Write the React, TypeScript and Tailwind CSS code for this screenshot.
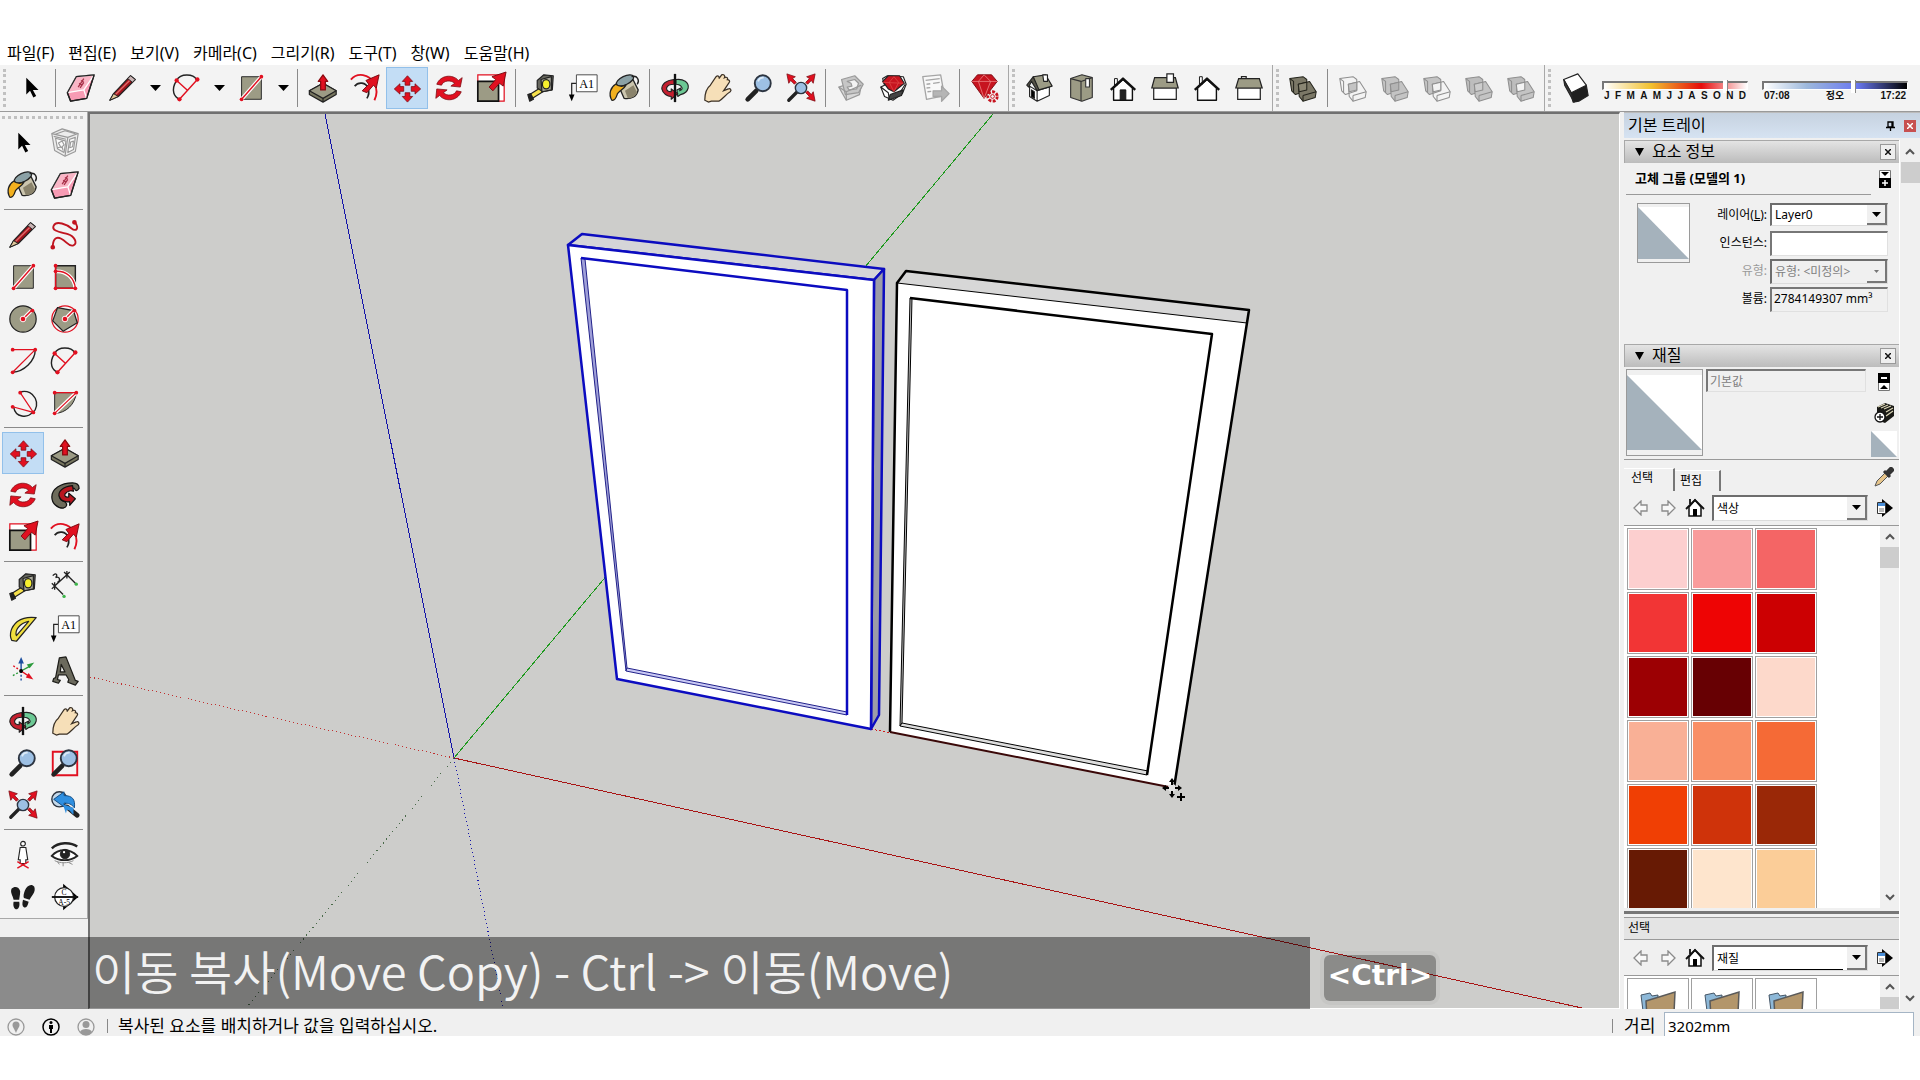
import { useState } from "react";
import type { ReactNode } from "react";

const RED = "#e11020";
const OLIVE = "#9c9b85";

const arrowUp = "M0 -14l5.500 6h-3v4h-5v-4h-3z";

function Lens() {
  return (
    <>
      <path d="M13 19L4 28" stroke="#222" strokeWidth="5" strokeLinecap="round" />
      <circle cx="20" cy="11" r="8.500" fill="#9dc0e4" stroke="#2c3440" strokeWidth="2" />
      <path d="M15 9a6 6 0 0 1 6-4" stroke="#dcebf8" strokeWidth="2" fill="none" />
    </>
  );
}

function Solids({ a, b, mid }: { a: string; b: string; mid: string }) {
  const line = a === "#7b7867" ? "#24241c" : "#8f8f8f";
  return (
    <g stroke={line} strokeWidth="1.100" strokeLinejoin="round">
      <path d="M2 6l14-2 4 3v12l-12 4-4-4z" fill={a} />
      <path d="M11 12l12-3 7 11-1 6-13 4-4-5z" fill={b} />
      <path d="M11 12l9-2v8l-8 2z" fill={mid} />
      <path d="M2 6l4 3v12M16 24l14-4M16 24v6" fill="none" />
    </g>
  );
}

const icons: Record<string, ReactNode> = {
  cursor: <path d="M11 5v18l4-4 3.500 7 3-1.500-3.500-6.500h6z" fill="#000" />,
  eraser: (
    <g stroke="#222" strokeWidth="1.400" strokeLinejoin="round">
      <path d="M1.500 21L11 4 30 2 22 27 5 30z" fill="#f79bb4" />
      <path d="M1.500 21L19 18 30 2 11 4z" fill="#f9b6c6" stroke="#fff" />
      <path d="M19 18l3 9" stroke="#fff" />
      <path d="M1.500 21L11 4 30 2 22 27 5 30z" fill="none" />
      <path d="M13 15l6-9M15 16l2-3M17 13l2-3M14 11l3 2M16 8l3 2" stroke="#a8324a" />
    </g>
  ),
  pencil: (
    <g strokeLinejoin="round">
      <path d="M6 22L24 3l5 4L11 25 2 29z" fill="#a3141c" stroke="#222" strokeWidth="1.300" />
      <path d="M8 23L26 5" stroke="#df6a6a" strokeWidth="1.500" />
      <path d="M6 22l5 3-9 4z" fill="#dfc79a" stroke="#222" />
      <path d="M24 3l5 4-3 3-5-4z" fill="#c9b4b4" stroke="#222" />
    </g>
  ),
  freehand: (
    <g fill="none" stroke="#c0141f" strokeWidth="2">
      <path d="M3 29c0-8 3-12 9-9s8 9 13 7 1-10-6-12S1 12 4 6s14-1 19 3 8 0 4-6" />
      <circle cx="3" cy="29" r="1.500" fill={RED} />
      <circle cx="26" cy="2.500" r="1.500" fill={RED} />
    </g>
  ),
  arc: (
    <g fill="none">
      <path d="M5 8C9 0 23 1 26 7M5 8C-2 19 3 26 8 28" stroke="#222" strokeWidth="1.500" />
      <path d="M5 8l12 11M27 7L8 28" stroke={RED} strokeWidth="1.500" />
      <g fill={RED}>
        <circle cx="5" cy="8" r="2.300" />
        <circle cx="27" cy="7" r="2.300" />
        <circle cx="8" cy="28" r="2.300" />
      </g>
    </g>
  ),
  rect: (
    <>
      <path d="M6 4h21v24H6z" fill={OLIVE} stroke="#222" />
      <path d="M6 28L27 4" stroke="#fff" strokeWidth="4" />
      <path d="M6 28L27 4" stroke={RED} strokeWidth="1.500" />
      <circle cx="6" cy="28" r="2" fill={RED} />
      <circle cx="27" cy="4" r="2" fill={RED} />
    </>
  ),
  rotrect: (
    <g fill="none" stroke={RED} strokeWidth="1.500">
      <path d="M6 4h21v24H6z" fill={OLIVE} stroke="#222" />
      <path d="M6 10c11-1 20 7 21 18" stroke="#fff" strokeWidth="4" />
      <path d="M6 4v24h21C26 17 17 9 6 10" />
      <g fill={RED} stroke="none">
        <circle cx="6" cy="4" r="2" />
        <circle cx="6" cy="10" r="2" />
        <circle cx="6" cy="28" r="2" />
        <circle cx="27" cy="28" r="2" />
      </g>
    </g>
  ),
  circle: (
    <>
      <circle cx="16" cy="16" r="14" fill={OLIVE} stroke="#222" strokeWidth="1.300" />
      <path d="M16 16l9-9" stroke="#fff" strokeWidth="4" />
      <path d="M16 16l9-9" stroke={RED} strokeWidth="1.500" />
      <circle cx="16" cy="16" r="3" fill={RED} stroke="#fff" />
      <circle cx="26" cy="7" r="2" fill={RED} />
    </>
  ),
  polygon: (
    <>
      <circle cx="16" cy="16" r="14" fill="none" stroke={RED} strokeWidth="1.300" />
      <path d="M8 4l17 3 4 13-15 9L3 18z" fill={OLIVE} stroke="#222" strokeWidth="1.300" />
      <path d="M16 16l9-9" stroke="#fff" strokeWidth="4" />
      <path d="M16 16l9-9" stroke={RED} strokeWidth="1.500" />
      <circle cx="16" cy="16" r="3" fill={RED} stroke="#fff" />
      <circle cx="26" cy="7" r="2" fill={RED} />
    </>
  ),
  arc2: (
    <g fill="none">
      <path d="M29 4c0 12-12 23-24 24" stroke="#222" strokeWidth="1.500" />
      <path d="M5 4h24L5 28" stroke={RED} strokeWidth="1.300" />
      <g fill={RED}>
        <circle cx="5" cy="4" r="2" />
        <circle cx="29" cy="4" r="2" />
        <circle cx="5" cy="28" r="2" />
      </g>
    </g>
  ),
  arc3: (
    <g fill="none">
      <path d="M14 4c14-3 22 14 12 23M6 20c2 12 15 12 20 6" stroke="#222" strokeWidth="1.500" />
      <path d="M13 5l14 21L5 20" stroke={RED} strokeWidth="1.300" />
      <g fill={RED}>
        <circle cx="13" cy="5" r="2" />
        <circle cx="27" cy="26" r="2" />
        <circle cx="5" cy="20" r="2" />
      </g>
    </g>
  ),
  pie: (
    <>
      <path d="M5 5v22C17 27 27 17 28 5z" fill={OLIVE} stroke="#222" />
      <path d="M5 27L28 5" stroke="#fff" strokeWidth="4" />
      <path d="M5 5h23L5 27" stroke={RED} strokeWidth="1.300" fill="none" />
      <g fill={RED}>
        <circle cx="5" cy="5" r="2" />
        <circle cx="28" cy="5" r="2" />
        <circle cx="5" cy="27" r="2" />
      </g>
    </>
  ),
  pushpull: (
    <g stroke="#222" strokeWidth="1.300" strokeLinejoin="round">
      <path d="M1.500 19L16 11l14 8v4L16 31 1.500 23z" fill="#77765f" />
      <path d="M1.500 19L16 11l14 8-14 8z" fill={OLIVE} />
      <path d="M16 27v4" />
      <path d="M16 2l5 7h-2.500v9h-5V9H11z" fill={RED} stroke="#8a0a10" />
    </g>
  ),
  offset: (
    <g fill="none">
      <path d="M1 7C8-1 20 1 26 11c3 6 3 12 0 18" stroke={RED} strokeWidth="2" />
      <path d="M5 14c4-5 12-4 14 2 2 5 1 8-1 11" stroke="#222" strokeWidth="1.800" />
      <path d="M13 19l7-7-3-4 14-6-3 14-3-3-7 8z" fill={RED} stroke="#7a0a10" />
    </g>
  ),
  move: (
    <g fill={RED} stroke="#7a0a10" strokeWidth=".8" transform="translate(16.500 17)">
      {[0, 90, 180, 270].map((r) => (
        <path key={r} d={arrowUp} transform={`rotate(${r})`} />
      ))}
    </g>
  ),
  rotate: (
    <g fill={RED} stroke="#7a0a10" strokeWidth=".8">
      <path d="M3 12C7 2 20 1 26 8l4-3-2 10-10-1 4-3C18 7 10 8 8 13z" />
      <path d="M29 20C25 30 12 31 6 24l-4 3 1-10 11 1-4 3c4 4 12 3 14-2z" />
    </g>
  ),
  followme: (
    <g stroke="#111" strokeWidth="1.300" strokeLinejoin="round">
      <path d="M31 9c0-3-2-6-7-6C11 3 2 10 2 18c0 7 6 12 12 12 4-1 5-4 2-7-4-1-6-3-6-6 1-6 9-9 16-8 1 3 3 3 5 0z" fill="#6d6b5b" />
      <path d="M24 6C13 7 8 13 10 18c2 4 6 6 11 5v4l6-7-7-6v4c-3 1-5-1-4-3 2-3 6-4 9-3z" fill="#b9161f" />
    </g>
  ),
  scale: (
    <>
      <path d="M2 2h28v28H2z" fill="#fff" stroke={RED} strokeWidth="1.300" />
      <path d="M2 9h22v21H2z" fill={OLIVE} stroke="#111" strokeWidth="1.800" />
      <path d="M14 15l7-8-4-3 15-5-3 15-4-3-7 8z" fill={RED} stroke="#7a0a10" />
    </>
  ),
  tape: (
    <g stroke="#222" strokeWidth="1.300" strokeLinejoin="round">
      <path d="M4 23l11-7 3 4-11 7z" fill="#f5e04a" />
      <path d="M2 23l3-1 3 6-4 2z" fill="#222" />
      <path d="M12 8l7-6 10 1-1 15-10 2-6-4z" fill="#67675e" />
      <path d="M16 7l11-3v14l-10 2z" fill="#aaa99b" />
      <ellipse cx="21.500" cy="12" rx="4" ry="5" fill="#f7f02e" />
    </g>
  ),
  dimension: (
    <g fill="none" stroke="#222" strokeWidth="1.400">
      <path d="M5 15L18 3M18 3l9 9M5 15l9 9M2 12l6 6M8 12l-6 6M5 11v8M15 0l6 6M21 0l-6 6M18-1v8" />
      <path d="M3 4c3-4 6-1 3 2 4-2 6 3 2 5" />
      <circle cx="28" cy="13" r="1.800" fill="#3db54a" stroke="none" />
      <circle cx="15" cy="26" r="1.800" fill="#3db54a" stroke="none" />
    </g>
  ),
  protractor: (
    <g stroke="#222" strokeWidth="1.300" strokeLinejoin="round">
      <path d="M4 28C1 22 3 14 10 8c6-4 13-5 20-4L9 29z" fill="#f0df3e" />
      <path d="M9 23c-2-5 3-13 13-15z" fill="#f3f3f3" />
    </g>
  ),
  label: (
    <g>
      <path d="M4 24V11h5" fill="none" stroke="#222" strokeWidth="1.300" />
      <path d="M1 23h6l-3 7z" />
      <path d="M9 2h22v18H9z" fill="#fff" stroke="#444" />
      <text x="20" y="16" textAnchor="middle" fontSize="13" fontFamily="Liberation Serif, serif">A1</text>
    </g>
  ),
  paint: (
    <g stroke="#222" strokeWidth="1.400" strokeLinejoin="round">
      <path d="M8 11L23 4l7 14c-1 7-7 10-15 9z" fill="#cbc5ae" />
      <path d="M16 19l3 8c4 0 8-2 10-6l-4-8z" fill="#8a836c" stroke="none" />
      <ellipse cx="16" cy="8" rx="10" ry="4.500" transform="rotate(-26 16 8)" fill="#8ba1a6" />
      <path d="M6 12C1 15-2 22 2 29c4 1 5-4 6-7 3-4 7-5 9-9-4 2-8 1-11-1z" fill="#f2b01e" />
      <path d="M23 4c6-2 9 4 6 8" fill="none" />
    </g>
  ),
  axes: (
    <g strokeWidth="1.500">
      <path d="M14 16v11" stroke="#1d4fa0" strokeDasharray="2 2" />
      <path d="M14 16L5 10" stroke={RED} strokeDasharray="2 2" />
      <path d="M14 16L5 21" stroke="#2a9a3a" strokeDasharray="2 2" />
      <path d="M14 16V6" stroke="#1d4fa0" />
      <path d="M11 8l3-7 3 7z" fill="#1d4fa0" />
      <path d="M14 16l9-5" stroke="#2a9a3a" />
      <path d="M20 9l8-2-5 6z" fill="#2a9a3a" />
      <path d="M14 16l9 6" stroke={RED} />
      <path d="M22 18l5 7-8-2z" fill={RED} />
      <circle cx="14" cy="16" r="2" />
    </g>
  ),
  text3d: (
    <g stroke="#1c1c18" strokeWidth="1.300" strokeLinejoin="round">
      <path d="M10 2l7-1 10 25 3 1-3 4-8-3 1-3-3-5H9l-1 5 3 1-2 3-6-2 1-3 2-1z" fill="#6b6a5d" />
      <path d="M12 9l4 8h-5z" fill="#f3f3f3" />
    </g>
  ),
  orbit: (
    <g stroke="#222" strokeWidth="1.200" strokeLinejoin="round">
      <path d="M17 7c8-1 14 3 13 9-1 4-4 6-8 7l-3 2-1-7 4-2-1 3c3-1 3-3 2-4-1-2-4-3-6-3z" fill="#6cc894" />
      <path d="M15 7C7 8 2 11 2 17c1 5 6 8 10 8v3l7-6-7-5v3c-4 0-5-2-5-4 1-3 4-4 8-4z" fill="#c4202f" />
      <path d="M16 1v30" strokeWidth="2.500" stroke="#111" />
    </g>
  ),
  pan: (
    <path
      d="M3 29c0-7 2-13 6-16l6-9c2-2 4 0 3 2l3-4c2-1 4 1 3 3 2-1 4 0 3 2 2 0 3 2 2 3l-6 9 5-2c2-1 4 1 2 3-5 3-7 7-12 10H10l-3 1z"
      fill="#f6dfb8"
      stroke="#3a3025"
      strokeWidth="1.300"
    />
  ),
  zoom: <Lens />,
  zoomwin: (
    <>
      <path d="M3 4h26v25H3z" fill="none" stroke={RED} strokeWidth="2" />
      <Lens />
    </>
  ),
  zoomext: (
    <>
      <path d="M12 20L3 29" stroke="#222" strokeWidth="3.500" strokeLinecap="round" />
      <circle cx="16" cy="16" r="6" fill="#9dc0e4" stroke="#2c3440" strokeWidth="1.500" />
      <g fill={RED} stroke="#7a0a10" strokeWidth=".8">
        <path d="M1 1l9 3-3 2 4 4-2 2-4-4-2 3z" />
        <path d="M31 1l-9 3 3 2-4 4 2 2 4-4 2 3z" />
        <path d="M31 30l-9-3 3-2-4-4 2-2 4 4 2-3z" />
      </g>
    </>
  ),
  zoomprev: (
    <>
      <circle cx="10" cy="10" r="8" fill="#c3d8ea" stroke="#2c3440" strokeWidth="1.500" />
      <path d="M18 18l11 9" stroke="#222" strokeWidth="5" strokeLinecap="round" />
      <path d="M4 10l11-8v4c9 0 12 4 11 13-3-4-6-5-11-5v4z" fill="#2f8fe0" stroke="#114a80" />
      <path d="M14 16c4 0 7 2 11 3v7c-3-2-3-5-7-5l-1 4z" fill="#2f8fe0" />
    </>
  ),
  camera: (
    <g stroke="#222" strokeWidth="1.200" fill="#fff">
      <circle cx="16" cy="4" r="2.500" />
      <path d="M13 8h6l2 13h-2v4h-6v-4h-2z" />
      <path d="M10 23l12 7M22 23l-12 7" stroke={RED} strokeWidth="1.500" />
    </g>
  ),
  eye: (
    <g fill="none" stroke="#222">
      <path d="M2 9C9 2 22 2 29 7" strokeWidth="2.500" />
      <path d="M2 17C9 9 21 9 29 17c-8 6-19 6-27 0z" fill="#fff" strokeWidth="2" />
      <circle cx="16" cy="15" r="5" fill="#222" />
      <circle cx="15" cy="13" r="1.200" fill="#fff" stroke="none" />
      <path d="M8 23l2 3M14 24v4M20 24l4 2M5 22c6 3 14 3 20 0" stroke="#888" />
    </g>
  ),
  walk: (
    <g fill="#1b1b1b">
      <path d="M4 7c3-3 8-2 9 3 0 4-1 7-1 9H6C5 14 2 11 4 7zM6 21h6c1 5-1 8-3 8s-4-3-3-8z" />
      <path d="M28 5c-3-4-8-1-10 4-1 3-2 6-1 8l6 2c2-5 7-8 5-14zM16 19l6 2c-1 5-3 7-5 6s-2-4-1-8z" />
    </g>
  ),
  section: (
    <g>
      <path d="M14 2l16 14-16 14z" />
      <circle cx="15" cy="16" r="10" fill="#fff" stroke="#222" strokeWidth="1.300" />
      <path d="M2 16h28" stroke="#111" strokeWidth="2" />
      <text x="15" y="14" textAnchor="middle" fontSize="8" fontFamily="Liberation Serif, serif">C</text>
      <text x="15" y="24" textAnchor="middle" fontSize="8" fontFamily="Liberation Serif, serif">A-5</text>
    </g>
  ),
  component: (
    <g fill="none" stroke="#999" strokeWidth="1.200" strokeLinejoin="round">
      <path d="M2 6l11-5 17 5-3 19-11 5L5 24z" fill="#ececec" />
      <path d="M2 6l17 4 11-4M19 10l-3 20M4 9l13 3M5 7l11-4 11 3" />
      <path d="M6 11l11 3-2 12-7-4zM21 12l6-2-2 13-6 3z" fill="#fafafa" />
      <path d="M9 16l4-2 2 4-3 3zM8 21l5-1 1 4M22 15l3-1-1 6-3 1z" />
    </g>
  ),
  warehouse: (
    <g stroke="#9a9a9a" strokeWidth="1.300" fill="#d8d8d8" strokeLinejoin="round">
      <path d="M3 15l12-4 12 2-2 10-14 6z" />
      <path d="M6 7l14-4 9 9-5 9-14 2z" fill="#c6c6c6" />
      <path d="M12 9l8-2 4 4-2 6-8 1-2-3 5-1-1-3z" fill="#f3f3f3" />
      <path d="M3 15l8 5 16-7M11 20v9" fill="none" />
    </g>
  ),
  ruby: (
    <g stroke="#222" strokeWidth="1.200" strokeLinejoin="round">
      <path d="M5 6l5-3 17 1 3 8-4 10-10 7-9-4-4-10 4-2z" fill="#fff" />
      <path d="M11 29l2-6 14-5-2 6z" fill="#444" />
      <path d="M3 15l8 6 1 7M29 12l-5 8" fill="none" />
      <path d="M5 9l6-6h12l5 8-11 9-6-3z" fill="#c7141f" />
      <path d="M5 10l22 1M12 10l5 10 5-10-5-6z" fill="none" stroke="#e04a4a" strokeWidth=".8" />
    </g>
  ),
  layout: (
    <g stroke="#a5a5a5" strokeWidth="1.400" fill="#f8f8f8" strokeLinejoin="round">
      <path d="M3 4l19-2 4 22-19 4z" />
      <path d="M6 8l15-2M7 12l4-.500M7 16l4-.500M8 20l4-.500M14 11l7-1" />
      <path d="M14 19h9v-5l8 8-8 8v-5h-9z" fill="#b5b5b5" />
    </g>
  ),
  rubygear: (
    <g stroke="#7d0a12" strokeWidth="1" strokeLinejoin="round">
      <path d="M2 9l6-7h15l6 7-14 18z" fill="#c7141f" />
      <path d="M2 9h27M9 9l6 18 7-18-7-7z" fill="none" stroke="#ee8a8a" strokeWidth=".8" />
      <circle cx="24" cy="25" r="5" fill="#f3f3f3" stroke="#c7141f" strokeWidth="3" strokeDasharray="3 1.500" />
      <circle cx="24" cy="25" r="2" fill="#f3f3f3" stroke="#c7141f" />
    </g>
  ),
  iso: (
    <g stroke="#222" strokeWidth="1.200" strokeLinejoin="round">
      <path d="M6 14l8 5v11l-8-5zM14 19l13-4v9l-13 6z" fill="#fff" />
      <path d="M3 13L10 4l6 13-2 2L8 9l-3 6z" fill="#555347" />
      <path d="M10 4l13-2 7 12-14 4z" fill={OLIVE} />
      <path d="M20 2h5v7h-4z" fill="#fff" />
      <path d="M8 18l3 2v7l-3-2z" />
    </g>
  ),
  top: (
    <g stroke="#333" strokeWidth="1.200" strokeLinejoin="round">
      <path d="M5 6l12-4 11 3v21l-11 4-12-4z" fill={OLIVE} />
      <path d="M5 6l11 3 12-4M16 9v21" fill="none" />
      <path d="M21 6h4v9h-4z" fill="#fff" />
    </g>
  ),
  front: (
    <g stroke="#111" strokeLinejoin="round">
      <path d="M6 16v13h20V16L16 7z" fill="#fff" strokeWidth="1.500" />
      <path d="M7 6h3v7H7z" fill="#fff" />
      <path d="M3 18L16 6l13 12" fill="none" strokeWidth="2.500" />
      <path d="M13 18h6v11h-6z" fill="#222" />
    </g>
  ),
  right: (
    <g stroke="#222" strokeWidth="1.300">
      <path d="M4 16h24v12H4z" fill="#fff" />
      <path d="M5 5h22l3 11H2z" fill={OLIVE} />
      <path d="M18 1h7v9h-7z" fill="#fff" />
    </g>
  ),
  back: (
    <g stroke="#111" strokeLinejoin="round">
      <path d="M6 16v13h20V16L16 7z" fill="#fff" strokeWidth="1.500" />
      <path d="M8 4h3v8H8z" fill="#fff" />
      <path d="M3 18L16 6l13 12" fill="none" strokeWidth="2.500" />
    </g>
  ),
  left: (
    <g stroke="#222" strokeWidth="1.300">
      <path d="M8 4h5v3H8z" fill="#fff" />
      <path d="M4 16h24v12H4z" fill="#fff" />
      <path d="M5 6h22l3 10H2z" fill={OLIVE} />
    </g>
  ),
  shell: <Solids a="#7b7867" b="#7b7867" mid="#8a8774" />,
  intersect: <Solids a="none" b="none" mid="#c4c4c4" />,
  union: <Solids a="#c4c4c4" b="#c4c4c4" mid="#b4b4b4" />,
  subtract: <Solids a="#c4c4c4" b="none" mid="#f3f3f3" />,
  trim: <Solids a="#bdbdbd" b="#c4c4c4" mid="#cdcdcd" />,
  split: <Solids a="#bdbdbd" b="#c4c4c4" mid="#f3f3f3" />,
  shadow: (
    <g stroke="#222" strokeWidth="1.200" strokeLinejoin="round">
      <path d="M11 20l17-7 2 11-10 6-6 1z" fill="#1f1f1f" />
      <path d="M4 7l15-6 9 12-16 8z" fill="#fff" />
      <path d="M4 7l8 14 3 10L5 13z" fill="#3a3a3a" />
    </g>
  ),
};

function Icon({ name }: { name: string }) {
  return (
    <svg className="w-8 h-8 overflow-visible" viewBox="-1 -1 34 34" aria-hidden="true">
      {icons[name]}
    </svg>
  );
}

function Tool({ name, active, onPick }: { name: string; active: boolean; onPick: (n: string) => void }) {
  return (
    <button
      type="button"
      aria-label={name}
      onClick={() => onPick(name)}
      className={`flex w-[42px] h-[42px] shrink-0 items-center justify-center border ${
        active ? "bg-[#c3ddf5] border-[#92c0ea]" : "border-transparent"
      }`}
    >
      <Icon name={name} />
    </button>
  );
}

const toolGroups: string[][] = [
  ["cursor", "|", "eraser", "pencil", "v", "arc", "v", "rect", "v", "|", "pushpull", "offset", "move", "rotate", "scale", "|", "tape", "label", "paint", "|", "orbit", "pan", "zoom", "zoomext", "|", "warehouse", "ruby", "layout", "|", "rubygear"],
  ["iso", "top", "front", "right", "back", "left"],
  ["shell", "|", "intersect", "union", "subtract", "trim", "split"],
  ["shadow"],
];

const sideGroups: string[][] = [
  ["cursor", "component", "paint", "eraser"],
  ["pencil", "freehand", "rect", "rotrect", "circle", "polygon", "arc2", "arc", "arc3", "pie"],
  ["move", "pushpull", "rotate", "followme", "scale", "offset"],
  ["tape", "dimension", "protractor", "label", "axes", "text3d"],
  ["orbit", "pan", "zoom", "zoomwin", "zoomext", "zoomprev"],
  ["camera", "eye", "walk", "section"],
];

const menus = ["파일(F)", "편집(E)", "보기(V)", "카메라(C)", "그리기(R)", "도구(T)", "창(W)", "도움말(H)"];

const swatches = [
  "#fccfcf", "#f99b9b", "#f46565",
  "#f23535", "#ee0404", "#cc0002",
  "#9c0003", "#670003", "#fdd9cb",
  "#f9b096", "#f98f66", "#f56a36",
  "#f03f04", "#cf330a", "#9a2807",
  "#671a04", "#fee5cd", "#fbcd98",
];

function ShadowSlider({ label, value, track, children }: { label: string; value: number; track: string; children: ReactNode }) {
  return (
    <div className="w-[146px] pt-4">
      <input
        type="range"
        aria-label={label}
        defaultValue={value}
        className={`block w-full h-[9px] appearance-none border-t-2 border-l-2 border-b border-r border-t-[#777] border-l-[#777] border-white ${track} [&::-webkit-slider-thumb]:appearance-none [&::-webkit-slider-thumb]:w-[5px] [&::-webkit-slider-thumb]:h-[13px] [&::-webkit-slider-thumb]:bg-white [&::-webkit-slider-thumb]:border-r [&::-webkit-slider-thumb]:border-[#888]`}
      />
      <div className="flex justify-between px-0.5 font-['Liberation_Sans','Noto_Sans_CJK_KR',sans-serif] text-[10px] leading-3 font-bold text-[#111]">
        {children}
      </div>
    </div>
  );
}

function DefaultFace({ className }: { className: string }) {
  return (
    <svg className={className} viewBox="0 0 50 50" preserveAspectRatio="none" aria-hidden="true">
      <path d="M0 0h50v50H0z" fill="#fff" />
      <path d="M0 0l50 50H0z" fill="#a5b2bc" />
    </svg>
  );
}

function SectionHeader({ title }: { title: string }) {
  return (
    <div className="flex items-center h-[23px] pl-[10px] pr-[3px] border-t border-l border-[#a8a8a8] bg-linear-to-b from-[#e4e4e4] to-[#bcbcbc]">
      <svg className="w-[9px] h-[8px] mr-2" viewBox="0 0 9 8" aria-hidden="true">
        <path d="M0 0h9L4.500 8z" />
      </svg>
      <h2 className="flex-1 pb-0.5 text-base leading-5">{title}</h2>
      <button type="button" aria-label="닫기" className="flex w-4 h-4 items-center justify-center border border-[#999] bg-[#eee]">
        <svg className="w-[6px] h-[6px]" viewBox="0 0 6 6" aria-hidden="true">
          <path d="M0 0l6 6M6 0L0 6" stroke="#111" strokeWidth="1.500" />
        </svg>
      </button>
    </div>
  );
}

type DropdownProps = {
  id: string;
  label?: string;
  value: string;
  disabled?: boolean;
  underlined?: boolean;
  className: string;
};

function Dropdown({ id, label, value, disabled, underlined, className }: DropdownProps) {
  return (
    <div className={`relative border-t-2 border-l-2 border-b border-r border-t-[#6d6d6d] border-l-[#6d6d6d] border-[#dcdcdc] ${className}`}>
      <select
        id={id}
        aria-label={label}
        disabled={disabled}
        className={`block w-full h-full appearance-none pl-[3px] outline-none opacity-100 ${disabled ? "text-[#808080] bg-[#f0f0f0]" : "bg-white"}`}
      >
        <option>{value}</option>
      </select>
      {underlined && <span className="absolute left-1 right-6 bottom-0 h-px bg-black pointer-events-none" />}
      <span className="absolute inset-y-0 right-0 flex w-5 items-center justify-center border-r-2 border-b-2 border-[#777] bg-[#f0f0f0] pointer-events-none">
        <svg className="w-[9px] h-[5px]" viewBox="0 0 9 5" aria-hidden="true">
          <path d={disabled ? "M2 1h5L4.500 4z" : "M0 0h9L4.500 5z"} fill={disabled ? "#777" : "#000"} />
        </svg>
      </span>
    </div>
  );
}

function Chevron({ up }: { up?: boolean }) {
  return (
    <svg className="w-[10px] h-[7px] shrink-0" viewBox="0 0 10 7" aria-hidden="true">
      <path d={up ? "M1 6l4-4 4 4" : "M1 1l4 4 4-4"} fill="none" stroke="#555" strokeWidth="2" />
    </svg>
  );
}

function CollectionNav({ id, value, underlined }: { id: string; value: string; underlined?: boolean }) {
  return (
    <div className="flex items-center h-[34px] pl-[9px]">
      <button type="button" aria-label="뒤로" className="w-[27px]">
        <svg className="w-4 h-4" viewBox="0 0 16 16" aria-hidden="true">
          <path d="M1 8l7-7v4h6v6H8v4z" fill="#f8f8f8" stroke="#8a8a8a" strokeWidth="1.300" />
        </svg>
      </button>
      <button type="button" aria-label="앞으로" className="w-[25px]">
        <svg className="w-4 h-4" viewBox="0 0 16 16" aria-hidden="true">
          <path d="M15 8L8 1v4H2v6h6v4z" fill="#f8f8f8" stroke="#8a8a8a" strokeWidth="1.300" />
        </svg>
      </button>
      <button type="button" aria-label="모델 안" className="w-[27px]">
        <svg className="w-5 h-5" viewBox="0 0 20 20" aria-hidden="true">
          <path d="M4 9v9h12V9l-6-7z" fill="#fff" stroke="#111" strokeWidth="1.500" />
          <path d="M1 11l9-9 9 9M5 6V1" fill="none" stroke="#111" strokeWidth="1.800" />
          <path d="M8 11h4v7H8z" />
        </svg>
      </button>
      <Dropdown id={id} label={value} value={value} underlined={underlined} className="w-[156px] h-[26px]" />
      <button type="button" aria-label="세부 정보" className="ml-[9px]">
        <svg className="w-4 h-[18px]" viewBox="0 0 16 18" aria-hidden="true">
          <path d="M5 0l11 9-11 9z" />
          <path d="M.5 3.500h8v11h-8z" fill="#fff" stroke="#333" />
          <path d="M1 4h7v3H1z" fill="#4b8fd8" />
          <path d="M2 10h5M2 12h5" stroke="#777" />
        </svg>
      </button>
    </div>
  );
}

const sunken = "border-t-2 border-l-2 border-b border-r border-t-[#777] border-l-[#777] border-[#e0e0e0] px-[2px] outline-none";

function Tray() {
  return (
    <aside className="w-[300px] shrink-0 pl-1 bg-[#f0f0f0] text-xs">
      <div className="flex items-center h-[26px] pl-1 pr-1 bg-linear-to-b from-[#c6d2e0] to-[#d6e3f2] border-t border-[#bbb]">
        <h1 className="flex-1 pb-px text-base leading-5">기본 트레이</h1>
        <svg className="w-[9px] h-[10px] mr-[9px]" viewBox="0 0 9 10" aria-hidden="true">
          <path d="M2 1h5v5H2zM0 6.500h9M4.500 6v4M6 1v5" fill="none" stroke="#000" strokeWidth="1.300" />
        </svg>
        <button type="button" aria-label="트레이 닫기" className="flex w-3 h-3 items-center justify-center bg-[#c75050]">
          <svg className="w-[6px] h-[6px]" viewBox="0 0 6 6" aria-hidden="true">
            <path d="M0 0l6 6M6 0L0 6" stroke="#fff" strokeWidth="1.500" />
          </svg>
        </button>
      </div>
      <div className="flex pt-0.5">
        <div className="w-[276px] border-r border-white">
          <SectionHeader title="요소 정보" />
          <div className="h-[181px]">
            <div className="flex items-center justify-between h-[31px] ml-0.5 mr-2 pl-[9px]">
              <strong className="text-[13px]">고체 그룹 (모델의 1)</strong>
              <svg className="w-3 h-[18px]" viewBox="0 0 12 18" aria-hidden="true">
                <path d="M.5 .5h11v17H.5z" fill="#fff" stroke="#777" />
                <path d="M2 2h8L6 6zM0 8h12v10H0z" />
                <path d="M3 13h6M6 10v6" stroke="#fff" strokeWidth="1.500" />
              </svg>
            </div>
            <div className="ml-0.5 mr-[28px] border-t border-[#9a9a9a]" />
            <div className="flex pt-2 pl-[13px]">
              <div className="w-[53px] h-[60px] py-[3px] border border-[#9a9a9a]">
                <DefaultFace className="w-full h-full" />
              </div>
              <div className="grid grid-cols-[77px_118px] flex-1 auto-rows-[25px] gap-x-[3px] gap-y-[3px] items-start">
                <label htmlFor="layer" className="text-right leading-6">레이어(<u>L</u>):</label>
                <Dropdown id="layer" value="Layer0" className="h-[23px]" />
                <label htmlFor="instance" className="text-right leading-6">인스턴스:</label>
                <input id="instance" className={`${sunken} w-full h-[25px] bg-white`} />
                <label htmlFor="kind" className="text-right leading-6 text-[#9a9a9a]">유형:</label>
                <Dropdown id="kind" value="유형: <미정의>" disabled className="h-[25px]" />
                <label htmlFor="volume" className="text-right leading-6">볼륨:</label>
                <input id="volume" readOnly value="2784149307 mm³" className={`${sunken} w-full h-[25px] pb-1 bg-[#f0f0f0]`} />
              </div>
            </div>
          </div>
          <SectionHeader title="재질" />
          <div className="flex items-start h-[93px] pt-0.5 pl-0.5 border-b border-[#999]">
            <div className="w-[77px] h-[87px] pt-[5px] pb-[5px] border border-[#9a9a9a]">
              <DefaultFace className="w-full h-full" />
            </div>
            <input aria-label="재질 이름" disabled value="기본값" className={`${sunken} w-[160px] h-[23px] ml-[3px] text-[#808080] bg-[#f0f0f0]`} />
            <div className="flex flex-col items-center gap-[11px] w-[26px] ml-[5px] pt-1">
              <svg className="w-3 h-[18px]" viewBox="0 0 12 18" aria-hidden="true">
                <path d="M.5 .5h11v17H.5z" fill="#fff" stroke="#777" />
                <path d="M0 0h12v10H0zM2 16h8l-4-4z" />
                <path d="M3 5h6" stroke="#fff" strokeWidth="2" />
              </svg>
              <svg className="w-5 h-[22px]" viewBox="0 0 20 22" aria-hidden="true">
                <path d="M3 5l8-4 9 3v10l-9 7-8-3z" fill="#1a1a16" />
                <path d="M4 5l7-3M7 6l7-3M10 7l7-3M12 10l7-4M12 14l7-5" stroke="#d8d3b4" strokeWidth="1.300" />
                <circle cx="6" cy="15" r="5" fill="#fff" stroke="#111" strokeWidth="1.300" />
                <path d="M3 15h6M6 12v6" stroke="#111" strokeWidth="1.300" />
              </svg>
              <DefaultFace className="w-[26px] h-[26px] -mt-1" />
            </div>
          </div>
          <div className="flex items-end h-[31px] pr-[5px]">
            <button type="button" className="w-[51px] h-[23px] pl-[7px] pb-1 text-left border-t border-t-white border-r-2 border-r-[#777]">선택</button>
            <button type="button" className="w-[46px] h-[21px] pl-[5px] text-left border-t border-t-white border-r-2 border-r-[#777]">편집</button>
            <button type="button" aria-label="샘플 페인트" className="ml-auto pb-1">
              <svg className="w-5 h-5" viewBox="0 0 20 20" aria-hidden="true">
                <path d="M1 19l2-5 8-8 3 3-8 8z" fill="#e7c58a" stroke="#555" />
                <path d="M10 4l6 6M12 6l5-5 2 2-5 5z" stroke="#333" strokeWidth="3" />
              </svg>
            </button>
          </div>
          <div className="border-b border-[#999]">
            <CollectionNav id="collection" value="색상" />
          </div>
          <div className="flex h-[382px] bg-white overflow-hidden">
            <div className="grid flex-1 grid-cols-[62px_62px_62px] auto-rows-[62px] gap-0.5 pt-0.5 pl-[3px]">
              {swatches.map((c) => (
                <button key={c} type="button" aria-label={c} className="p-px border border-[#a0a0a0] bg-white">
                  <span className="block w-full h-full" style={{ backgroundColor: c }} />
                </button>
              ))}
            </div>
            <div className="flex flex-col items-center w-[19px] py-[7px] bg-[#f0f0f0]">
              <Chevron up />
              <div className="w-full h-[21px] mt-[7px] mb-auto bg-[#cdcdcd]" />
              <Chevron />
            </div>
          </div>
          <div className="mt-[3px] h-[3px] bg-[#777]" />
          <div className="mt-[3px] h-[23px] pl-1 leading-5 border-y border-[#999] bg-[#e4e4e4]">선택</div>
          <div className="pt-px border-b border-[#999]">
            <CollectionNav id="collection2" value="재질" underlined />
          </div>
          <div className="flex h-[33px] bg-white overflow-hidden">
            <div className="grid flex-1 grid-cols-[62px_62px_62px] auto-rows-[62px] gap-0.5 pt-0.5 pl-[3px]">
              {[0, 1, 2].map((i) => (
                <button key={i} type="button" aria-label="폴더" className="border border-[#a0a0a0]">
                  <svg className="w-full h-full" viewBox="0 0 60 60" aria-hidden="true">
                    <path d="M13 16l9-2 2 3 6-1-2 40H18z" fill="#8db8d8" stroke="#456" />
                    <path d="M18 22l29-9-2 42H20z" fill="#b3966b" stroke="#5a5a5a" strokeWidth="1.500" />
                  </svg>
                </button>
              ))}
            </div>
            <div className="flex flex-col items-center w-[19px] pt-[7px] bg-[#f0f0f0]">
              <Chevron up />
              <div className="w-full h-[21px] mt-[7px] bg-[#cdcdcd]" />
            </div>
          </div>
        </div>
        <div className="flex flex-1 flex-col items-center pt-2 pb-[7px]">
          <Chevron up />
          <div className="w-[19px] h-[21px] mt-[7px] mb-auto bg-[#cdcdcd]" />
          <Chevron />
        </div>
      </div>
    </aside>
  );
}

function Viewport() {
  return (
    <svg className="block w-full" viewBox="90 114 1529 894" role="img" aria-label="모델">
      <path d="M90 114h1529v894H90z" fill="#cdcdcb" />
      <g fill="none" strokeWidth="1" shapeRendering="crispEdges">
        <path d="M454 758L325 114" stroke="#1414a8" />
        <path d="M454 758L993 114" stroke="#1e9a1e" />
        <path d="M454 758l1128 250" stroke="#a81414" />
        <path d="M454 758L90 677" stroke="#c03030" strokeDasharray="1 3" />
        <path d="M454 758L246 1008" stroke="#4a6a4a" strokeDasharray="1 4" />
        <path d="M454 758l49 250" stroke="#1414a8" strokeDasharray="1 3" />
        <path d="M871 729l20 4" stroke="#d02020" strokeDasharray="2 2" />
      </g>
      <g stroke="#0c0cc0" strokeWidth="2.500" strokeLinejoin="round">
        <path d="M568 245l14-11 302 35-10 11z" fill="#d5d5d8" />
        <path d="M874 280l10-11-5 446-8 14z" fill="#9c9ca8" />
        <path d="M568 245l306 35-3 449-254-50z" fill="#fff" />
        <path d="M581 258l4 1 42 409-1 3z" fill="#a0a0d8" strokeWidth="1" stroke="#22228a" />
        <path d="M627 668l220 44v3l-221-44z" fill="#c8c8f4" strokeWidth="1" stroke="#22228a" />
        <path d="M581 258l266 32v425" fill="none" />
      </g>
      <g stroke="#000" strokeWidth="2.500" strokeLinejoin="round">
        <path d="M897 283l9-12 343 39-2 13z" fill="#d7d7d7" stroke="none" />
        <path d="M897 283l350 40-73 465-284-56z" fill="#fff" stroke="none" />
        <path d="M897 283l350 40" strokeWidth="1" />
        <path d="M1174 788l75-478-343-39-9 12-7 449" fill="none" />
        <path d="M890 732l284 56" stroke="#3a0808" strokeWidth="2" />
        <path d="M910 298l2 0-10 425-2 3z" fill="#bbb" strokeWidth="1" />
        <path d="M902 723l246 48-1 4-247-49z" fill="#ddd" strokeWidth="1" />
        <path d="M910 298l302 36-65 441" fill="none" />
      </g>
      <g transform="translate(1172 788)">
        <circle r="4" fill="#e4e4e4" />
        {[0, 90, 180, 270].map((r) => (
          <path key={r} d="M-1 -3v-3h-2L0 -10l3 4H1v3z" transform={`rotate(${r})`} />
        ))}
        <path d="M9 5v8M5 9h8" stroke="#000" strokeWidth="2" />
      </g>
    </svg>
  );
}

export default function App() {
  const [tool, setTool] = useState("move");
  const [distance, setDistance] = useState("3202mm");

  return (
    <div className="bg-white text-black font-['Noto_Sans','Noto_Sans_CJK_KR',sans-serif] overflow-hidden">
      <nav className="flex items-center gap-[14px] h-[65px] pt-10 pl-[7px] text-base leading-5">
        {menus.map((m) => (
          <button key={m} type="button">{m}</button>
        ))}
      </nav>

      <div className="flex h-[47px] bg-[#f3f3f3] border-b border-[#9a9a9a]">
        {toolGroups.map((group, gi) => (
          <div key={gi} className={`flex items-center pr-0.5 ${gi > 0 ? "border-l border-[#a8a8a8]" : ""}`}>
            <div className={`h-[38px] ml-[3px] border-l-[3px] border-dotted border-[#c0c0c0] ${gi > 0 ? "mr-[3px]" : "mr-1"}`} />
            {group.map((t, i) => {
              if (t === "|") return <div key={i} className="w-px h-[38px] ml-[3px] mr-1 bg-[#8a8a8a]" />;
              if (t === "v")
                return (
                  <button key={i} type="button" aria-label="더 보기" className="flex w-[22px] h-[42px] items-center justify-center">
                    <svg className="w-[11px] h-[6px]" viewBox="0 0 11 6" aria-hidden="true">
                      <path d="M0 0h11L5.500 6z" />
                    </svg>
                  </button>
                );
              return <Tool key={i} name={t} active={tool === t} onPick={setTool} />;
            })}
          </div>
        ))}
        <div className="flex gap-[14px] pl-1">
          <ShadowSlider label="날짜" value={86} track="bg-[linear-gradient(to_right,#fff,#f2c12e_33%,#e60c0c_68%,#fff)]">
            {"JFMAMJJASOND".split("").map((m, i) => (
              <span key={i}>{m}</span>
            ))}
          </ShadowSlider>
          <ShadowSlider label="시간" value={63} track="bg-[linear-gradient(to_right,#fff,#9db8dc_30%,#6a78f0_65%,#000)]">
            <span>07:08</span>
            <span>정오</span>
            <span>17:22</span>
          </ShadowSlider>
        </div>
      </div>

      <div className="relative flex items-stretch">
        <aside className="w-[88px] shrink-0 bg-[#f0f0f0]">
          <div className="bg-[#f3f3f3] border-b border-r border-[#a8a8a8] pl-0.5">
            <div className="h-[10px] pt-1">
              <div className="mr-1 border-t-[3px] border-dotted border-[#c0c0c0]" />
            </div>
            {sideGroups.map((group, gi) => (
              <div key={gi}>
                {gi > 0 && <div className="h-px mt-[3px] mb-1 ml-0.5 mr-1 bg-[#8a8a8a]" />}
                <div className="grid grid-cols-[42px_42px]">
                  {group.map((t) => (
                    <Tool key={t} name={t} active={tool === t} onPick={setTool} />
                  ))}
                </div>
              </div>
            ))}
          </div>
        </aside>
        <main className="flex-1 min-w-0 border-t-2 border-l-2 border-[#707070] border-r border-r-white border-b border-b-white">
          <Viewport />
        </main>
        <Tray />

        <div className="absolute inset-x-0 bottom-0 flex items-start h-18 pointer-events-none">
          <p className="w-[1310px] h-full pl-[92px] bg-black/42 text-[#f2f2f2] font-['Noto_Sans_CJK_KR',sans-serif] font-[350] text-[47px] leading-[66px] whitespace-nowrap">
            이동 복사(Move Copy) - Ctrl -&gt; 이동(Move)
          </p>
          <kbd className="w-[112px] h-[46px] mt-[18px] ml-[14px] rounded-md bg-black/32 ring-4 ring-black/3 text-center text-white font-['DejaVu_Sans',sans-serif] font-bold text-[28px] leading-[42px]">
            &lt;Ctrl&gt;
          </kbd>
        </div>
      </div>

      <footer className="flex items-center h-[27px] bg-[#f0f0f0] pl-[7px]">
        <div className="flex gap-[17px] pt-2">
          <svg className="w-[18px] h-[18px]" viewBox="0 0 18 18" aria-hidden="true">
            <circle cx="9" cy="9" r="8" fill="none" stroke="#999" strokeWidth="1.300" />
            <path d="M9 15C7 10 5.500 9 5.500 7a3.500 3.500 0 0 1 7 0c0 2-1.500 3-3.500 8z" fill="#999" />
          </svg>
          <svg className="w-[18px] h-[18px]" viewBox="0 0 18 18" aria-hidden="true">
            <circle cx="9" cy="9" r="8" fill="none" stroke="#000" strokeWidth="1.500" />
            <circle cx="9" cy="4.500" r="1.500" />
            <path d="M7 7h4v4h-1v4H8v-4H7z" />
          </svg>
          <svg className="w-[18px] h-[18px]" viewBox="0 0 18 18" aria-hidden="true">
            <circle cx="9" cy="9" r="8" fill="none" stroke="#999" strokeWidth="1.300" />
            <circle cx="9" cy="6.500" r="3.500" fill="#999" />
            <path d="M3 14c1-4 11-4 12 0-3 4-9 4-12 0z" fill="#999" />
          </svg>
        </div>
        <div className="w-px h-[14px] mt-1.5 ml-3 mr-[10px] bg-[#888]" />
        <p className="flex-1 pt-1.5 text-[17px] leading-5 whitespace-nowrap">복사된 요소를 배치하거나 값을 입력하십시오.</p>
        <div className="w-px h-[14px] mt-1.5 mr-[11px] bg-[#888]" />
        <label htmlFor="distance" className="w-[40px] pt-1.5 text-[17px] leading-5">거리</label>
        <input
          id="distance"
          value={distance}
          onChange={(e) => setDistance(e.target.value)}
          className="w-[250px] h-6 mt-[3px] mr-1.5 pt-0.5 pl-[3px] border border-b-0 border-[#a5b5c5] bg-white text-[15px] outline-none"
        />
      </footer>
    </div>
  );
}
